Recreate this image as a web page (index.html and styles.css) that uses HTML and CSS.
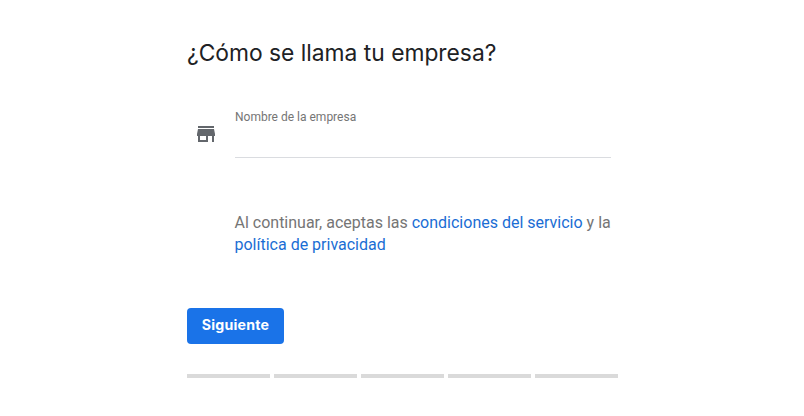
FILE: index.html
```html
<!DOCTYPE html>
<html lang="es">
<head>
  <meta charset="UTF-8">
  <title>Nombre de la empresa</title>
  <link rel="stylesheet" href="styles.css">
</head>
<body>
  <main class="page">
    <h1 class="title">¿Cómo se llama tu empresa?</h1>

    <div class="field-row">
      <svg class="store-icon" viewBox="0 0 24 24" width="24" height="24">
        <path d="M20 4H4v2h16V4zm1 10v-2l-1-5H4l-1 5v2h1v6h10v-6h4v6h2v-6h1zm-9 4H6v-4h6v4z"/>
      </svg>
      <div class="field">
        <label class="field-label" for="name">Nombre de la empresa</label>
        <input class="field-input" id="name" type="text">
      </div>
    </div>

    <p class="terms">
      Al continuar, aceptas las <a href="#">condiciones del servicio</a> y la
      <a href="#">política de privacidad</a>
    </p>

    <button class="next-btn" type="button">Siguiente</button>

    <div class="progress">
      <span></span>
      <span></span>
      <span></span>
      <span></span>
      <span></span>
    </div>
  </main>
</body>
</html>
```

FILE: styles.css
```css
html, body {
  margin: 0;
  padding: 0;
  background-color: #fff;
}

body {
  font-family: Roboto, "Liberation Sans", sans-serif;
  color: #757575;
}

.page {
  width: 431px;
  margin-left: 187px;
  padding-top: 37px;
}

.title {
  margin: 0;
  font-family: Inter, Roboto, sans-serif;
  font-size: 22.8px;
  line-height: 32px;
  font-weight: 400;
  color: #202124;
}

.field-row {
  display: flex;
  margin-top: 40px;
}

.store-icon {
  flex: none;
  margin: 13px 0 0 7px;
  fill: #63676c;
}

.field {
  width: 376px;
  margin-left: 17px;
}

.field-label {
  display: block;
  font-size: 12px;
  line-height: 16px;
  color: #757575;
}

.field-input {
  display: block;
  width: 100%;
  height: 33px;
  padding: 0;
  border: none;
  border-bottom: 1px solid #dadce0;
  box-sizing: border-box;
  outline: none;
}

.terms {
  width: 384px;
  margin: 54px 0 0 47.5px;
  font-size: 16px;
  line-height: 22px;
}

.terms a {
  color: #1a6dd4;
  text-decoration: none;
}

.next-btn {
  display: block;
  width: 97px;
  height: 36px;
  margin-top: 52px;
  padding: 0 0 3px;
  background-color: #1a73e8;
  color: #fff;
  border: none;
  border-radius: 4px;
  font-family: Inter, Roboto, sans-serif;
  font-size: 14.2px;
  font-weight: 700;
  letter-spacing: 0.2px;
  cursor: pointer;
}

.progress {
  display: flex;
  gap: 4px;
  margin-top: 30px;
}

.progress span {
  width: 83px;
  height: 4px;
  background-color: #dadada;
}
```
